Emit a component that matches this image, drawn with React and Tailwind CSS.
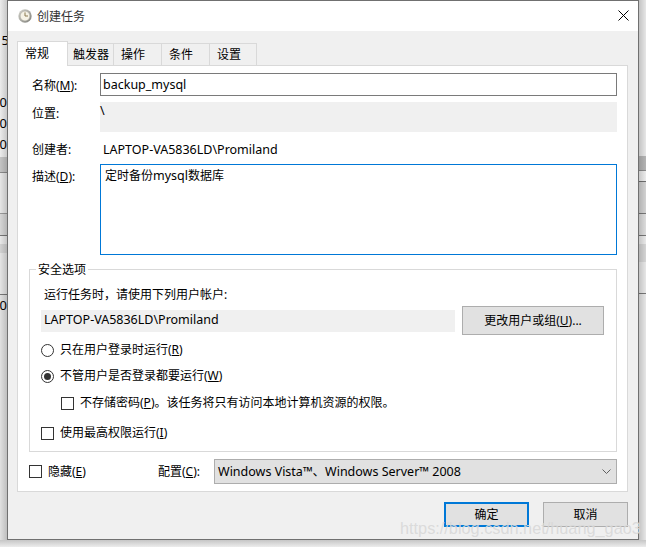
import React from "react";

const FONT = "font-['Noto_Sans','Noto_Sans_CJK_SC',sans-serif]";

function Clock() {
  return (
    <svg width="14" height="14" viewBox="0 0 14 14" className="shrink-0">
      <defs>
        <linearGradient id="cl" x1="0" y1="0" x2="1" y2="1">
          <stop offset="0" stopColor="#d8d8d0" />
          <stop offset="1" stopColor="#7d7d78" />
        </linearGradient>
      </defs>
      <circle cx="7" cy="7" r="6.7" fill="url(#cl)" />
      <circle cx="7" cy="7" r="4.9" fill="#f6f3e6" stroke="#9a9a94" strokeWidth="0.5" />
      <path d="M7 3.4V7H10" fill="none" stroke="#8a7a50" strokeWidth="1" />
    </svg>
  );
}

function Check() {
  return <span className="block w-[13px] h-[13px] border border-[#333] bg-white shrink-0" />;
}

function Radio({ on }) {
  return (
    <span className="flex items-center justify-center w-[13px] h-[13px] rounded-full border border-[#333] bg-white shrink-0">
      {on && <span className="block w-[7px] h-[7px] rounded-full bg-[#333]" />}
    </span>
  );
}

function Tab({ label, active, w, pad }) {
  return active ? (
    <div className={`${w} h-[25px] -mb-px z-10 relative border border-b-0 border-[#d9d9d9] bg-white pl-[7px] pt-[2px] leading-[20px]`}>
      {label}
    </div>
  ) : (
    <div className={`${w} ${pad} h-[22px] border border-l-0 border-b-0 border-[#d9d9d9] bg-[#f0f0f0] flex items-center leading-[20px] pt-[1px]`}>
      {label}
    </div>
  );
}

function Strip({ rows }) {
  return (
    <div className="flex flex-col h-full">
      {rows.map(([h, c], i) => (
        <div key={i} className={`${h} ${c} w-full`} />
      ))}
    </div>
  );
}

export default function App() {
  return (
    <div className={`relative w-[646px] h-[547px] overflow-hidden flex flex-col text-black text-[12px] ${FONT}`}>
      <div className="flex h-[540px] shrink-0">
        {/* left background */}
        <div className="relative w-[7px] h-full overflow-hidden text-[13px]">
          <Strip
            rows={[
              ["h-[157px]", "bg-[#ececec]"],
              ["h-[15px]", "bg-[#c4c4c4]"],
              ["h-[1px]", "bg-[#8a8a8a]"],
              ["h-[40px]", "bg-[#e6e6e6]"],
              ["h-[1px]", "bg-[#9a9a9a]"],
              ["h-[21px]", "bg-[#d6d6d6]"],
              ["h-[1px]", "bg-[#777]"],
              ["h-[8px]", "bg-[#e8e8e8]"],
              ["h-[9px]", "bg-[#d2d2d2]"],
              ["h-[41px]", "bg-[#e4e4e4]"],
              ["h-[1px]", "bg-[#777]"],
              ["flex-1", "bg-[#e0e0e0]"],
            ]}
          />
          <span className="absolute left-[-6px] top-[31px] leading-[18px]">15</span>
          <span className="absolute right-0 top-[93px] leading-[18px]">00</span>
          <span className="absolute right-0 top-[114px] leading-[18px]">00</span>
          <span className="absolute right-0 top-[135px] leading-[18px]">0</span>
          <span className="absolute right-0 top-[296px] leading-[18px]">0</span>
          <div className="absolute inset-0 bg-linear-to-r from-transparent to-black/15" />
        </div>

        {/* dialog */}
        <div className="w-[632px] h-[540px] border border-[#707070] bg-[#f0f0f0] flex flex-col shrink-0">
          <div className="h-[30px] bg-white flex items-center pl-[10px] pr-[9px] shrink-0">
            <Clock />
            <span className="ml-[5px] flex-1 leading-[20px] pt-[2px] text-[#333]">创建任务</span>
            <svg width="11" height="11" viewBox="0 0 11 11" className="mb-[1px]">
              <path d="M0.5 0.5L10.5 10.5M10.5 0.5L0.5 10.5" stroke="#000" strokeWidth="1" />
            </svg>
          </div>

          <div className="flex-1 pl-[9px] pr-[10px] pt-[10px] flex flex-col">
            <div className="flex items-end h-[24px]">
              <Tab label="常规" active w="w-[51px]" />
              <Tab label="触发器" w="w-[46px]" pad="pl-[5px]" />
              <Tab label="操作" w="w-[48px]" pad="pl-[7px]" />
              <Tab label="条件" w="w-[48px]" pad="pl-[7px]" />
              <Tab label="设置" w="w-[47px]" pad="pl-[7px]" />
            </div>

            <div className="h-[427px] border border-[#d9d9d9] bg-white pl-[11px] pr-[10px] pt-[7px] flex flex-col">
              <div className="flex items-center h-[23px]">
                <span className="w-[71px] pl-[3px] pt-[2px]">名称(<u>M</u>):</span>
                <div className="flex-1 h-full border border-[#7a7a7a] pl-[2px] pt-[1px] flex items-center text-[12.5px]">backup_mysql</div>
              </div>
              <div className="flex mt-[6px] h-[30px]">
                <span className="w-[71px] pl-[3px] leading-[24px]">位置:</span>
                <div className="flex-1 bg-[#f0f0f0] leading-[18px] text-[12.5px]">\</div>
              </div>
              <div className="flex items-center mt-[9px] h-[18px]">
                <span className="w-[71px] pl-[3px]">创建者:</span>
                <span className="pl-[3px] text-[12.5px]">LAPTOP-VA5836LD\Promiland</span>
              </div>
              <div className="flex mt-[5px] h-[91px]">
                <span className="w-[71px] pl-[3px] leading-[26px]">描述(<u>D</u>):</span>
                <div className="flex-1 border border-[#0078d7] pl-[4px] pt-[1px] leading-[20px]">
                  定时备份<span className="text-[12.5px]">mysql</span>数据库
                </div>
              </div>

              <fieldset className="mt-[6px] h-[191px] border border-[#d9d9d9] pl-[11px]">
                <legend className="-ml-[5px] px-[2px] bg-white leading-[16px]">
                  <span className="relative top-[1px]">安全选项</span>
                </legend>
                <div className="pl-[3px] mt-[9px] leading-[18px]">运行任务时，请使用下列用户帐户:</div>
                <div className="flex items-center mt-[2px] h-[29px]">
                  <div className="w-[414px] h-[22px] bg-[#f0f0f0] pl-[3px] pb-[1px] flex items-center text-[12.5px]">LAPTOP-VA5836LD\Promiland</div>
                  <div className="ml-[7px] w-[142px] h-[29px] bg-[#e1e1e1] border border-[#adadad] flex items-center justify-center">
                    更改用户或组(<u>U</u>)...
                  </div>
                </div>
                <div className="flex items-center mt-[6px] h-[18px]">
                  <Radio />
                  <span className="ml-[6px]">只在用户登录时运行(<u>R</u>)</span>
                </div>
                <div className="flex items-center mt-[8px] h-[18px]">
                  <Radio on />
                  <span className="ml-[6px]">不管用户是否登录都要运行(<u>W</u>)</span>
                </div>
                <div className="flex items-center mt-[9px] h-[18px] pl-[20px]">
                  <Check />
                  <span className="ml-[6px]">不存储密码(<u>P</u>)。该任务将只有访问本地计算机资源的权限。</span>
                </div>
                <div className="flex items-center mt-[12px] h-[18px]">
                  <Check />
                  <span className="ml-[6px]">使用最高权限运行(<u>I</u>)</span>
                </div>
              </fieldset>

              <div className="flex items-center mt-[7px] h-[25px]">
                <Check />
                <span className="ml-[6px] w-[110px]">隐藏(<u>E</u>)</span>
                <span className="w-[56px]">配置(<u>C</u>):</span>
                <div className="flex-1 h-[25px] bg-[#e1e1e1] border border-[#adadad] flex items-center pl-[3px] pr-[5px] pt-[2px] justify-between text-[12.5px]">
                  <span>Windows Vista™、Windows Server™ 2008</span>
                  <svg width="9" height="6" viewBox="0 0 9 6" className="mb-[2px]">
                    <path d="M0.5 0.5L4.5 4.5L8.5 0.5" fill="none" stroke="#606060" strokeWidth="1" />
                  </svg>
                </div>
              </div>
            </div>

            <div className="flex justify-end mt-[10px]">
              <div className="w-[85px] h-[25px] bg-[#e1e1e1] border-2 border-[#0078d7] flex items-center justify-center">确定</div>
              <div className="ml-[14px] w-[85px] h-[25px] bg-[#e1e1e1] border border-[#adadad] flex items-center justify-center">取消</div>
            </div>
          </div>
        </div>

        {/* right background */}
        <div className="relative flex-1 h-full">
          <Strip
            rows={[
              ["h-[156px]", "bg-[#e6e6e6]"],
              ["h-[14px]", "bg-[#b4b4b4]"],
              ["h-[1px]", "bg-[#8a8a8a]"],
              ["h-[10px]", "bg-[#ececec]"],
              ["h-[1px]", "bg-[#6f6f6f]"],
              ["h-[31px]", "bg-[#d2d2d2]"],
              ["h-[1px]", "bg-[#777]"],
              ["h-[21px]", "bg-[#dcdcdc]"],
              ["h-[1px]", "bg-[#777]"],
              ["h-[8px]", "bg-[#e8e8e8]"],
              ["h-[18px]", "bg-[#d4d4d4]"],
              ["h-[31px]", "bg-[#e6e6e6]"],
              ["h-[1px]", "bg-[#777]"],
              ["flex-1", "bg-[#e6e6e6]"],
            ]}
          />
          <div className="absolute inset-0 bg-linear-to-r from-black/15 to-transparent" />
        </div>
      </div>
      <div className="flex-1 bg-linear-to-b from-[#c6c6c6] to-[#ececec]" />

      <div className="absolute left-[400px] top-[518px] font-['Liberation_Sans',sans-serif] text-[16.3px] leading-[20px] text-[#d8d8d8]/90 whitespace-nowrap">
        https://blog.csdn.net/huang_gao3
      </div>
    </div>
  );
}
